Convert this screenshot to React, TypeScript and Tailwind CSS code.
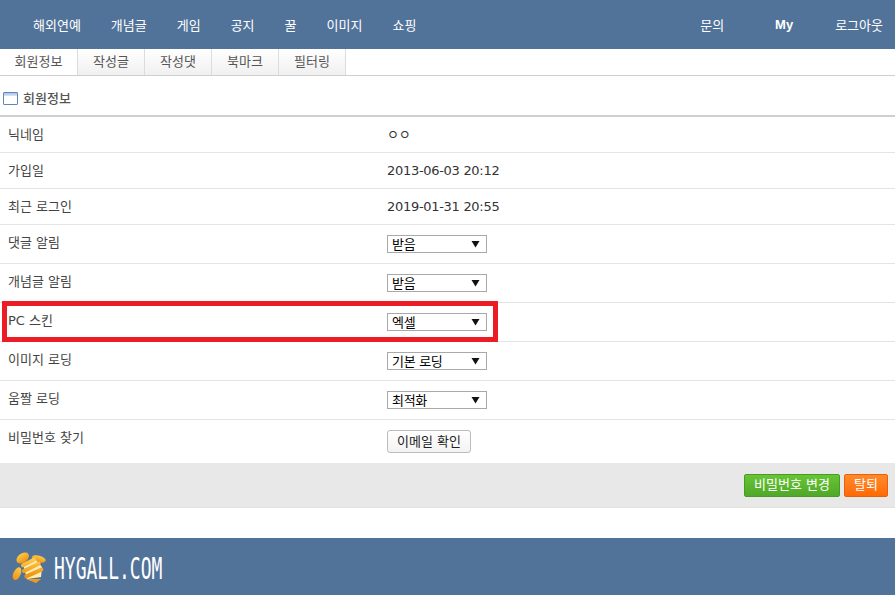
const font = "font-['DejaVu_Sans','Noto_Sans_CJK_KR',sans-serif]";

const navLeft = ["해외연예", "개념글", "게임", "공지", "꿀", "이미지", "쇼핑"];
const tabs = ["회원정보", "작성글", "작성댓", "북마크", "필터링"];

const Select = ({ value }: { value: string }) => (
  <div className="mt-[1px] flex h-[18px] w-[100px] items-center justify-between border border-[#a9a9a9] bg-white pl-[4px] pr-[6px] text-[13px] leading-none text-black">
    <span>{value}</span>
    <svg width="9" height="8" viewBox="0 0 9 8">
      <path d="M0.5 1h8L4.5 7.5z" fill="#111" />
    </svg>
  </div>
);

const Row = ({ label, h, children }: { label: string; h: string; children: React.ReactNode }) => (
  <div className={`flex ${h} border-b border-[#e4e4e4]`}>
    <div className="w-[387px] pt-[9px] pl-[8px] text-[13px] leading-[18px] text-[#444]">{label}</div>
    <div className="flex-1 pt-[9px] text-[13px] leading-[18px] tracking-[-0.3px] text-[#333]">{children}</div>
  </div>
);

const Bee = () => (
  <svg width="36" height="34" viewBox="0 0 36 34">
    <defs>
      <linearGradient id="beeFill" x1="0" y1="0" x2="0" y2="1">
        <stop offset="0" stopColor="#fcc94a" />
        <stop offset="1" stopColor="#ef9210" />
      </linearGradient>
    </defs>
    <ellipse cx="10.7" cy="8" rx="7" ry="4.6" transform="rotate(-35 10.7 8)" fill="url(#beeFill)" />
    <ellipse cx="26.7" cy="9" rx="7.2" ry="3.4" transform="rotate(15 26.7 9)" fill="url(#beeFill)" />
    <ellipse cx="5" cy="23.7" rx="3.6" ry="6.8" transform="rotate(25 5 23.7)" fill="url(#beeFill)" />
    <path d="M11 14 L22 8 L30 17 L29 27 L15 29z" fill="#fdeeb8" />
    <path d="M11 15.3 L22 9.7 M12 21 L26.7 13.7 M14.3 26.3 L29.3 19.7" stroke="url(#beeFill)" strokeWidth="4" strokeLinecap="round" />
    <path d="M14 29 L29 29 L24 33z" fill="#f29a14" />
  </svg>
);

export default function App() {
  return (
    <div className={`relative h-[595px] w-[895px] overflow-hidden bg-white ${font}`}>
      {/* top nav */}
      <div className="flex h-[49px] items-center justify-between bg-[#527399] pt-[2px] text-[13px] text-white">
        <div className="flex gap-[30px] pl-[33px]">
          {navLeft.map((n) => (
            <div key={n}>{n}</div>
          ))}
        </div>
        <div className="flex items-center pr-[12px]">
          <div>문의</div>
          <div className="ml-[51px] -mt-[2px] font-['Liberation_Sans'] font-bold">My</div>
          <div className="ml-[42px]">로그아웃</div>
        </div>
      </div>

      {/* tabs */}
      <div className="flex h-[27px] border-b border-[#cfcfcf] text-[13px] text-[#555]">
        {tabs.map((t, i) => (
          <div
            key={t}
            className={`flex h-[26px] items-center justify-center border-r border-[#dcdcdc] ${
              i === 0 ? "w-[78px] bg-white" : "w-[67px] bg-gradient-to-b from-white to-[#f0f0f0]"
            }`}
          >
            {t}
          </div>
        ))}
      </div>

      {/* section title */}
      <div className="flex h-[41px] items-center gap-[5px] border-b-[2px] border-[#cfcfcf] pt-[6px] pl-[3px] text-[13px] font-medium text-[#555]">
        <div className="h-[13px] w-[15px] rounded-[1px] border border-[#5f86bd] bg-white">
          <div className="h-[3px] bg-gradient-to-b from-[#a9c2e6] to-[#dbe6f5]" />
        </div>
        회원정보
      </div>

      {/* rows */}
      <Row label="닉네임" h="h-[36px]">ㅇㅇ</Row>
      <Row label="가입일" h="h-[36px]">2013-06-03 20:12</Row>
      <Row label="최근 로그인" h="h-[36px]">2019-01-31 20:55</Row>
      <Row label="댓글 알림" h="h-[39px]"><Select value="받음" /></Row>
      <Row label="개념글 알림" h="h-[39px]"><Select value="받음" /></Row>
      <Row label="PC 스킨" h="h-[39px]"><Select value="엑셀" /></Row>
      <Row label="이미지 로딩" h="h-[39px]"><Select value="기본 로딩" /></Row>
      <Row label="움짤 로딩" h="h-[39px]"><Select value="최적화" /></Row>
      <div className="flex h-[43px]">
        <div className="w-[387px] pt-[9px] pl-[8px] text-[13px] leading-[18px] text-[#444]">비밀번호 찾기</div>
        <div className="pt-[10px]">
          <div className="flex h-[23px] w-[84px] items-center justify-center rounded-[3px] border border-[#bbb] bg-gradient-to-b from-white to-[#f3f3f3] text-[13px] text-[#222]">이메일 확인</div>
        </div>
      </div>

      {/* action bar */}
      <div className="flex h-[45px] items-center justify-end gap-[4px] border-b border-[#e0e0e0] bg-[#e8e8e8] pr-[7px] text-[13px] text-white">
        <div className="flex h-[23px] w-[96px] items-center justify-center rounded-[2px] border border-[#4a9a25] bg-gradient-to-b from-[#68c535] to-[#4fa82a]">비밀번호 변경</div>
        <div className="flex h-[23px] w-[44px] items-center justify-center rounded-[2px] border border-[#e8610a] bg-gradient-to-b from-[#ff8a2a] to-[#ff6a00]">탈퇴</div>
      </div>

      {/* footer */}
      <div className="mt-[30px] flex h-[57px] items-center gap-[6px] bg-[#527399] pl-[12px]">
        <Bee />
        <span className="mt-[4px] origin-left scale-x-[0.6] font-['DejaVu_Sans_Mono',monospace] text-[30px] leading-none text-white">HYGALL.COM</span>
      </div>

      {/* red highlight */}
      <div className="absolute left-[2px] top-[301px] h-[41px] w-[496px] border-[5px] border-[#ed1c24]" />
    </div>
  );
}
